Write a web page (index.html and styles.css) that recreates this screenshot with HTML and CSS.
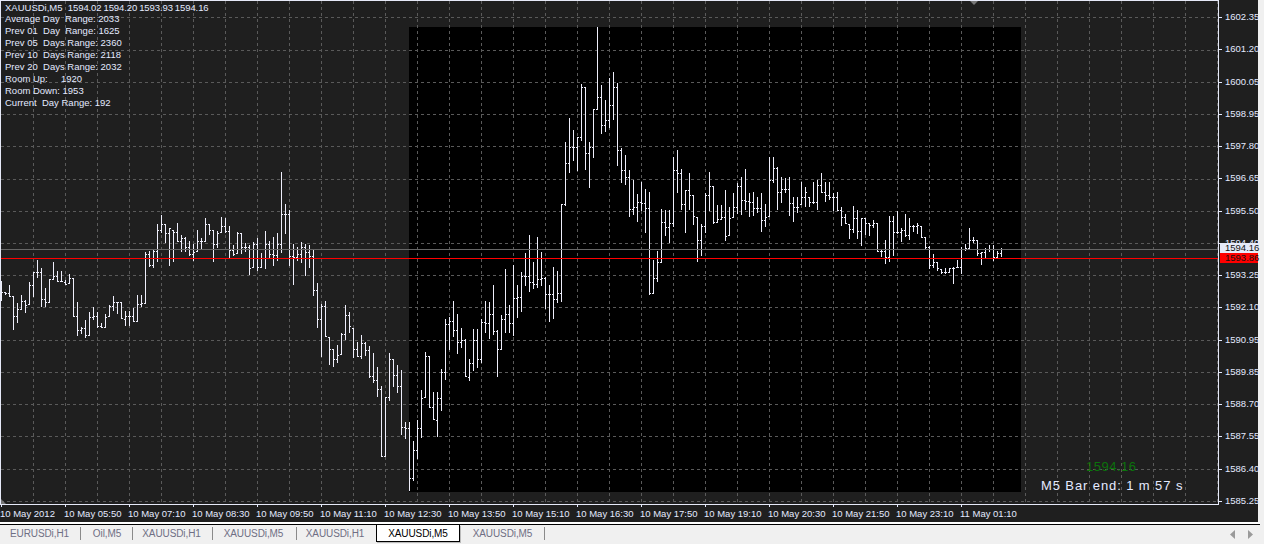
FILE: index.html
```html
<!DOCTYPE html>
<html lang="en">
<head>
<meta charset="utf-8">
<title>XAUUSDi,M5</title>
<link rel="stylesheet" href="styles.css">
</head>
<body>
<div class="terminal">
  <main class="chart">
    <section class="plot">
      <svg id="canvas" class="canvas" width="1219" height="505" viewBox="0 0 1219 505" aria-hidden="true"></svg>
      <div class="overlay-info">
        <div class="ohlc">XAUUSDi,M5  <span class="ohlc-values">1594.02 1594.20 1593.93 1594.16</span></div>
        <ul class="ranges">
          <li>Average Day  Range: 2033</li>
          <li>Prev 01  Day  Range: 1625</li>
          <li>Prev 05  Days Range: 2360</li>
          <li>Prev 10  Days Range: 2118</li>
          <li>Prev 20  Days Range: 2032</li>
          <li>Room Up:     1920</li>
          <li>Room Down: 1953</li>
          <li>Current  Day Range: 192</li>
        </ul>
      </div>
      <div class="overlay-timer">
        <div class="timer-price">1594.16</div>
        <div class="timer-text">M5 Bar end: 1 m 57 s</div>
      </div>
    </section>
    <aside class="price-axis">
      <span class="price">1602.35</span>
      <span class="price">1601.20</span>
      <span class="price">1600.05</span>
      <span class="price">1598.95</span>
      <span class="price">1597.80</span>
      <span class="price">1596.65</span>
      <span class="price">1595.50</span>
      <span class="price">1594.40</span>
      <span class="price">1593.25</span>
      <span class="price">1592.10</span>
      <span class="price">1590.95</span>
      <span class="price">1589.85</span>
      <span class="price">1588.70</span>
      <span class="price">1587.55</span>
      <span class="price">1586.40</span>
      <span class="price">1585.25</span>
      <span class="tag tag-bid">1594.16</span>
      <span class="tag tag-line">1593.86</span>
    </aside>
    <footer class="time-axis">
      <span class="time">10 May 2012</span>
      <span class="time">10 May 05:50</span>
      <span class="time">10 May 07:10</span>
      <span class="time">10 May 08:30</span>
      <span class="time">10 May 09:50</span>
      <span class="time">10 May 11:10</span>
      <span class="time">10 May 12:30</span>
      <span class="time">10 May 13:50</span>
      <span class="time">10 May 15:10</span>
      <span class="time">10 May 16:30</span>
      <span class="time">10 May 17:50</span>
      <span class="time">10 May 19:10</span>
      <span class="time">10 May 20:30</span>
      <span class="time">10 May 21:50</span>
      <span class="time">10 May 23:10</span>
      <span class="time">11 May 01:10</span>
    </footer>
  </main>
  <nav class="tabs">
    <a class="tab t1">EURUSDi,H1</a>
    <a class="tab t2">Oil,M5</a>
    <a class="tab t3">XAUUSDi,H1</a>
    <a class="tab t4">XAUUSDi,M5</a>
    <a class="tab t5">XAUUSDi,H1</a>
    <a class="tab t6 active">XAUUSDi,M5</a>
    <a class="tab t7">XAUUSDi,M5</a>
    <div class="tab-arrows">
      <svg width="6" height="9" viewBox="0 0 6 9"><path d="M5 0V9L0 4.5Z"/></svg>
      <svg width="6" height="9" viewBox="0 0 6 9"><path d="M1 0V9L6 4.5Z"/></svg>
    </div>
  </nav>
</div>
<script src="chart.js"></script>
</body>
</html>
```
FILE: styles.css
```css
* { box-sizing: border-box; }
html, body { margin: 0; padding: 0; }
body {
  width: 1264px;
  height: 544px;
  overflow: hidden;
  background: #f0f0f0;
  font-family: "Liberation Sans", Arial, sans-serif;
}
.terminal {
  display: flex;
  flex-direction: column;
  height: 544px;
}
.chart {
  display: grid;
  grid-template-columns: 1219px 39px;
  grid-template-rows: 505px 17px;
  width: 1258px;
  background: #1f1f1f;
  color: #e4eaff;
  font-size: 9.5px;
}
.plot {
  position: relative;
  grid-column: 1;
  grid-row: 1;
}
.canvas { display: block; }
.overlay-info {
  position: absolute;
  left: 5px;
  top: 2px;
}
.ohlc {
  height: 11px;
  line-height: 12px;
  white-space: pre;
}
.ohlc-values {
  letter-spacing: -0.1px;
  word-spacing: -0.5px;
}
.ranges {
  list-style: none;
  margin: 0;
  padding: 0;
}
.ranges li {
  height: 12px;
  line-height: 12px;
  white-space: pre;
}
.overlay-timer {
  position: absolute;
  left: 1041px;
  top: 458px;
  width: 142px;
  white-space: nowrap;
}
.timer-price {
  height: 18px;
  line-height: 18px;
  padding-left: 45px;
  font-size: 13px;
  letter-spacing: 0.5px;
  color: #0b720b;
}
.timer-text {
  height: 19px;
  line-height: 19px;
  font-size: 13px;
  letter-spacing: 0.9px;
  color: #e4eaff;
}
.price-axis {
  position: relative;
  grid-column: 2;
  grid-row: 1 / 3;
  display: flex;
  flex-direction: column;
  justify-content: space-between;
  padding: 11px 0 15px;
}
.price {
  height: 12px;
  line-height: 12px;
  padding-left: 6px;
  background: linear-gradient(#e4eaff, #e4eaff) left 6px / 3px 1px no-repeat;
}
.tag {
  position: absolute;
  left: 1px;
  width: 38px;
  padding-left: 5px;
  color: #111;
}
.tag-bid {
  top: 243px;
  height: 10px;
  line-height: 10px;
  background: #e6e9f8;
}
.tag-line {
  top: 253px;
  height: 10px;
  line-height: 10px;
  background: #f00;
}
.time-axis {
  grid-column: 1;
  grid-row: 2;
  display: grid;
  grid-template-columns: repeat(16, 64px);
  align-items: stretch;
}
.time {
  line-height: 18px;
  white-space: nowrap;
  background: linear-gradient(#e4eaff, #e4eaff) 1px top / 1px 2px no-repeat;
}
.tabs {
  display: flex;
  align-items: flex-start;
  width: 1260px;
  height: 22px;
  border-top: 2px solid #fff;
  font-size: 10px;
  letter-spacing: -0.1px;
  color: #6f6f84;
}
.tab {
  display: flex;
  align-items: center;
  justify-content: center;
  height: 17px;
  margin-top: 1px;
  white-space: nowrap;
  box-shadow: 0 -1px 0 #000;
  background: linear-gradient(#8a8a8a, #8a8a8a) right center / 1px 13px no-repeat;
}
.t1 { width: 81px; padding-right: 2px; }
.t2 { width: 52px; }
.t3 { width: 80px; padding-right: 3px; }
.t4 { width: 84px; padding-right: 3px; }
.t5 { width: 79px; padding-right: 3px; background: none; }
.t6 { width: 84px; }
.t7 { width: 85px; }
.tab.active {
  color: #000;
  background: #fff;
  border: 1px solid #000;
  border-top: 0;
  box-shadow: 0 -1px 0 #000, 1px 1px 0 #bbb;
}
.tab-arrows {
  flex: 1;
  display: flex;
  justify-content: flex-end;
  align-items: center;
  gap: 11px;
  padding-right: 7px;
  height: 19px;
  margin-top: 1px;
  box-shadow: 0 -1px 0 #000;
}
.tab-arrows svg { fill: #9a9a9a; display: block; }
```
FILE: chart.js
```js
(function () {
  var NS = 'http://www.w3.org/2000/svg';
  var svg = document.getElementById('canvas');
  function el(tag, attrs) {
    var e = document.createElementNS(NS, tag);
    for (var k in attrs) e.setAttribute(k, attrs[k]);
    svg.appendChild(e);
    return e;
  }
  var W = 1218, H = 504;
  el('rect', { x: 409, y: 27, width: 612, height: 465, fill: '#000' });

  var gridY = [17, 50, 82, 114, 146, 179, 211, 243, 275, 307, 340, 372, 404, 436, 469, 501];
  var d = '';
  gridY.forEach(function (y) { d += 'M1 ' + (y + 0.5) + 'H' + W; });
  for (var x = 33; x < W; x += 32) d += 'M' + (x + 0.5) + ' 1V' + H;
  el('path', { d: d, stroke: '#5a5a5a', 'stroke-width': 1, 'stroke-dasharray': '3 3', fill: 'none', 'shape-rendering': 'crispEdges' });

  // Bars: each segment gives a crop origin and "zx top bottom close" in 3x crop coordinates.
  var segments = [
    [0, 165, '4 348 408 382;16 380 390 385;28 360 395 392;40 392 494 452;52 415 473 432;64 390 435 408;76 405 443 420;88 350 420 360;100 322 395 322;112 285 338 322;124 310 427 403;136 370 427 410;148 343 413 343;160 292 345 332;172 318 352 350;184 318 352 350;196 345 360 358;208 327 358 340;220 338 456 452;232 412 512 496;244 487 508 490;256 465 518 510;268 442 512 457;280 427 465 452;292 440 490 483;304 475 490 490;316 447 490 455;328 420 455 422;340 393 438 412;352 410 446 412;364 412 463 462;376 438 482 452;388 438 484 452;400 430 470 470;412 390 472 418;424 390 425 413;436 262 418 268;448 258 305 300;460 255 310 258;472 178 292 195;484 150 205 178;496 178 233 205;508 190 302 190;520 195 292 200;532 175 232 228;544 210 260 218;556 215 260 245;568 228 272 268;580 238 288 262;592 195 262 228;604 220 252 228;616 158 232 178;628 178 210 195;640 195 290 238;652 198 250 205;664 157 205 182;676 158 205 198;688 182 278 255;700 240 272 268;712 200 268 205;724 205 268 245;736 235 260 245;748 240 330 310;760 232 310 238;772 218 318 305'],
    [250, 165, '33 265 308 278;45 198 313 238;57 228 280 268;69 217 302 270;81 205 288 237;93 22 263 148;105 118 207 148;117 135 303 272;129 238 360 276;141 247 288 268;153 232 293 247;165 238 332 260;177 240 308 272;189 255 392 376;201 355 490 462;213 418 575 422;225 408 515 515;237 515 600 553;249 552 605 582;261 540 593 570;273 503 570 507;285 420 525 450;297 440 505 482;309 490 578 552;321 530 575 572;333 510 582 535;345 530 572 555;357 543 638 632;369 565 655 645;381 605 695 672;393 663 875 872;405 695 875 695;417 565 708 582;429 583 665 630;441 600 683 662;453 615 810 785;465 770 822 790;477 770 978 940;489 828 948 855;501 765 882 788;513 675 818 698;525 560 698 572;537 572 728 725;549 680 765 765;561 680 815 700;573 612 738 622;585 462 645 478;597 455 555 468;609 408 516 495;621 447 567 530;633 490 548 525;645 522 637 635;657 583 648 595;669 492 618 525;681 492 608 582;693 462 593 470;705 408 503 473;717 410 522 447;729 360 510 497;741 495 635 553;753 450 555 463;765 312 503 447;777 420 503 475;789 300 513 400;801 360 460 395;813 322 440 333;825 265 362 333;837 210 380 350;849 292 372 357;861 217 368 342;873 262 362 338;885 335 432 388;897 360 470 388'],
    [520, 20, '100 742 897 838;112 752 850 820;124 552 845 552;136 365 558 430;148 293 458 382;160 330 422 380;172 350 452 352;184 192 362 200;196 200 450 398;208 365 503 380;220 268 413 268;232 22 270 232;244 195 342 316;256 240 335 300;268 173 325 255;280 155 300 202;292 188 438 390;304 385 488 450;316 405 495 470;328 450 590 568;340 480 585 560;352 522 605 545;364 485 573 548;376 508 638 565;388 516 825 820;400 720 822 775;412 693 785 725;424 568 728 607;436 570 648 620;448 570 670 610;460 410 620 450;472 390 518 458;484 447 570 552;496 510 640 510;508 460 570 525;520 525 615 588;532 590 725 660;544 612 708 618;556 520 638 525;568 457 572 498;580 498 612 607;592 555 608 597;604 555 600 590;616 510 662 648;628 562 648 595;640 518 595 560;652 488 582 498;664 472 585 540;676 447 570 543;688 520 590 545;700 517 587 565;712 530 580 565;724 520 635 600;736 552 620 592;748 410 590 480;760 410 490 445;772 440 570 517'],
    [760, 145, '64 95 175 132;76 100 143 132;88 97 212 175;100 155 230 185;112 155 205 185;124 110 180 155;136 125 185 140;148 155 185 170;160 110 177 170;172 105 195 120;184 85 145 140;196 112 170 150;208 112 165 155;220 145 198 155;232 142 198 195;244 187 243 215;256 207 238 235;268 237 282 252;280 183 263 220;292 195 282 258;304 218 302 220;316 218 270 235;328 235 273 240;340 225 248 235;352 233 320 318;364 315 335 318;376 285 357 335;388 213 350 228;400 212 332 262;412 198 267 262;424 250 290 255;436 208 275 270;448 220 285 242;460 240 260 242;472 233 268 240;484 242 280 277;496 275 312 305;508 303 372 360;520 327 370 350;532 350 377 370;544 372 388 382;556 370 387 382;568 370 385 370;580 367 416 370;592 345 368 365;604 307 388 312;616 297 317 310;628 250 315 285;640 277 295 285;652 285 333 325;664 320 360 322;676 310 340 312;688 300 322 312;700 300 347 335;712 318 340 325;724 310 335 312']
  ];

  var bars = '';
  var prev = null;
  segments.forEach(function (seg) {
    seg[2].split(';').forEach(function (item) {
      var p = item.split(' ').map(Number);
      var k = Math.round((seg[0] + p[0] / 3 - 1) / 4);
      var px = 1 + 4 * k;
      var top = Math.round(seg[1] + p[1] / 3);
      var bot = Math.round(seg[1] + p[2] / 3);
      var cl = Math.round(seg[1] + p[3] / 3);
      bars += 'M' + (px + 0.5) + ' ' + top + 'V' + bot;
      if (prev !== null) bars += 'M' + (px - 1) + ' ' + (Math.min(Math.max(prev, top), bot - 1) + 0.5) + 'H' + px;
      bars += 'M' + (px + 1) + ' ' + (Math.min(cl, bot - 1) + 0.5) + 'H' + (px + 2);
      prev = cl;
    });
  });
  el('path', { d: bars, stroke: '#eeeefb', 'stroke-width': 1, fill: 'none', 'shape-rendering': 'crispEdges' });

  el('path', { d: 'M0 249.5H1219', stroke: '#666', fill: 'none', 'shape-rendering': 'crispEdges' });
  el('path', { d: 'M0 258.5H1219', stroke: '#f00', fill: 'none', 'shape-rendering': 'crispEdges' });
  el('path', { d: 'M0.5 0.5H1218.5V504.5H0.5Z', stroke: '#e6e9f8', fill: 'none', 'shape-rendering': 'crispEdges' });
  el('polygon', { points: '970,1 978,1 974,5', fill: '#777' });
  el('polygon', { points: '1,499 1,504 6,504', fill: '#777' });
})();
```
